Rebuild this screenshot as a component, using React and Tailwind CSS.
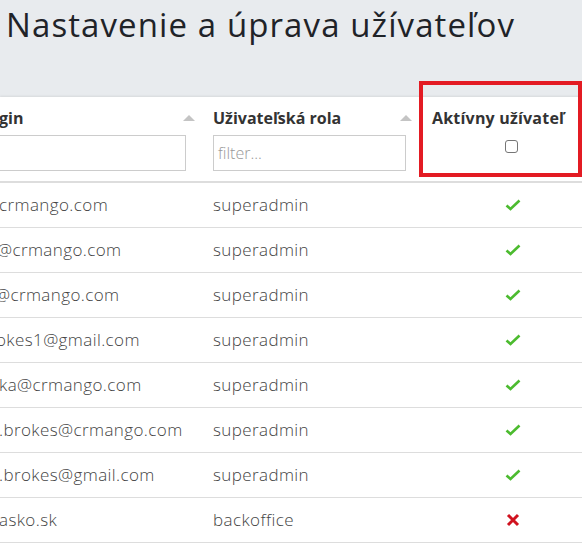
import React from 'react';

const rows = [
  { login: 'crmango.com', role: 'superadmin', active: true, shift: '-ml-[1px]' },
  { login: '@crmango.com', role: 'superadmin', active: true, shift: '-ml-[3px]' },
  { login: '@crmango.com', role: 'superadmin', active: true, shift: '-ml-[5px]' },
  { login: 'okes1@gmail.com', role: 'superadmin', active: true, shift: '-ml-[4px]' },
  { login: 'ka@crmango.com', role: 'superadmin', active: true, shift: '-ml-[1px]' },
  { login: '.brokes@crmango.com', role: 'superadmin', active: true, shift: '-ml-[1px]' },
  { login: '.brokes@gmail.com', role: 'superadmin', active: true, shift: '-ml-[1px]' },
  { login: 'asko.sk', role: 'backoffice', active: false, shift: '-ml-[1px]' },
];

const SortArrow = () => (
  <svg width="12" height="6" viewBox="0 0 12 6" className="shrink-0">
    <path d="M0 6 L6 0 L12 6 Z" fill="#c4c4c4" />
  </svg>
);

const Check = () => (
  <svg width="16" height="12" viewBox="0 0 16 12">
    <path d="M1.5 6.5 L5.5 10 L14.5 1.5" fill="none" stroke="#4cbb2f" strokeWidth="2.6" />
  </svg>
);

const Cross = () => (
  <svg width="14" height="14" viewBox="0 0 14 14">
    <path d="M2 2 L12 12 M12 2 L2 12" fill="none" stroke="#d0121f" strokeWidth="3" />
  </svg>
);

const App = () => {
  return (
    <div className="w-[582px] h-[545px] overflow-hidden bg-[#e8ebee] font-['Open_Sans',sans-serif]">
      <h1 className="h-[97px] pl-[6px] pt-[4px] text-[33px] leading-[42px] tracking-[1.1px] text-[#1f2328] whitespace-nowrap">
        Nastavenie a úprava užívateľov
      </h1>

      <div className="bg-white shadow-[0_-1px_2px_rgba(0,0,0,0.08)]">
        <div className="relative grid grid-cols-[204px_212px_1fr] h-[86px] border-b-2 border-[#dddddd] text-[#333]">
          <div className="pt-[10px] pr-[9px]">
            <div className="flex items-center justify-between h-[22px]">
              <span className="font-bold text-[16px] -ml-[1px]">gin</span>
              <SortArrow />
            </div>
            <div className="mt-[6px] h-[36px] w-[187px] border border-[#cccccc] -ml-[1px]" />
          </div>
          <div className="pt-[10px] pl-[9px] pr-[4px]">
            <div className="flex items-center justify-between h-[22px]">
              <span className="font-bold text-[16px]">Uživateľská rola</span>
              <SortArrow />
            </div>
            <div className="mt-[6px] h-[36px] w-[193px] border border-[#cccccc] px-[4px] flex items-center text-[16px] text-[#999] font-light">
              filter...
            </div>
          </div>
          <div className="pt-[10px] pl-[16px]">
            <div className="h-[22px] flex items-center font-bold text-[16px] tracking-[0.2px] whitespace-nowrap">Aktívny užívateľ</div>
            <div className="mt-[11px] pl-[73px]">
              <div className="w-[13px] h-[13px] border border-[#767676] rounded-[3px]" />
            </div>
          </div>
          <div className="absolute left-[419px] top-[-16px] w-[163px] h-[96px] border-4 border-[#e31b23]" />
        </div>

        {rows.map((r, i) => (
          <div key={i} className="grid grid-cols-[204px_212px_1fr] h-[45px] items-center border-b border-[#dddddd] text-[17px] tracking-[0.4px] text-[#444] font-light">
            <div className={`whitespace-nowrap ${r.shift}`}>{r.login}</div>
            <div className="pl-[9px]">{r.role}</div>
            <div className="flex pl-[89px]">
              <div className="w-[16px] flex justify-center">
                {r.active ? <Check /> : <Cross />}
              </div>
            </div>
          </div>
        ))}
        <div className="h-[45px]" />
      </div>
    </div>
  );
};

export default App;
